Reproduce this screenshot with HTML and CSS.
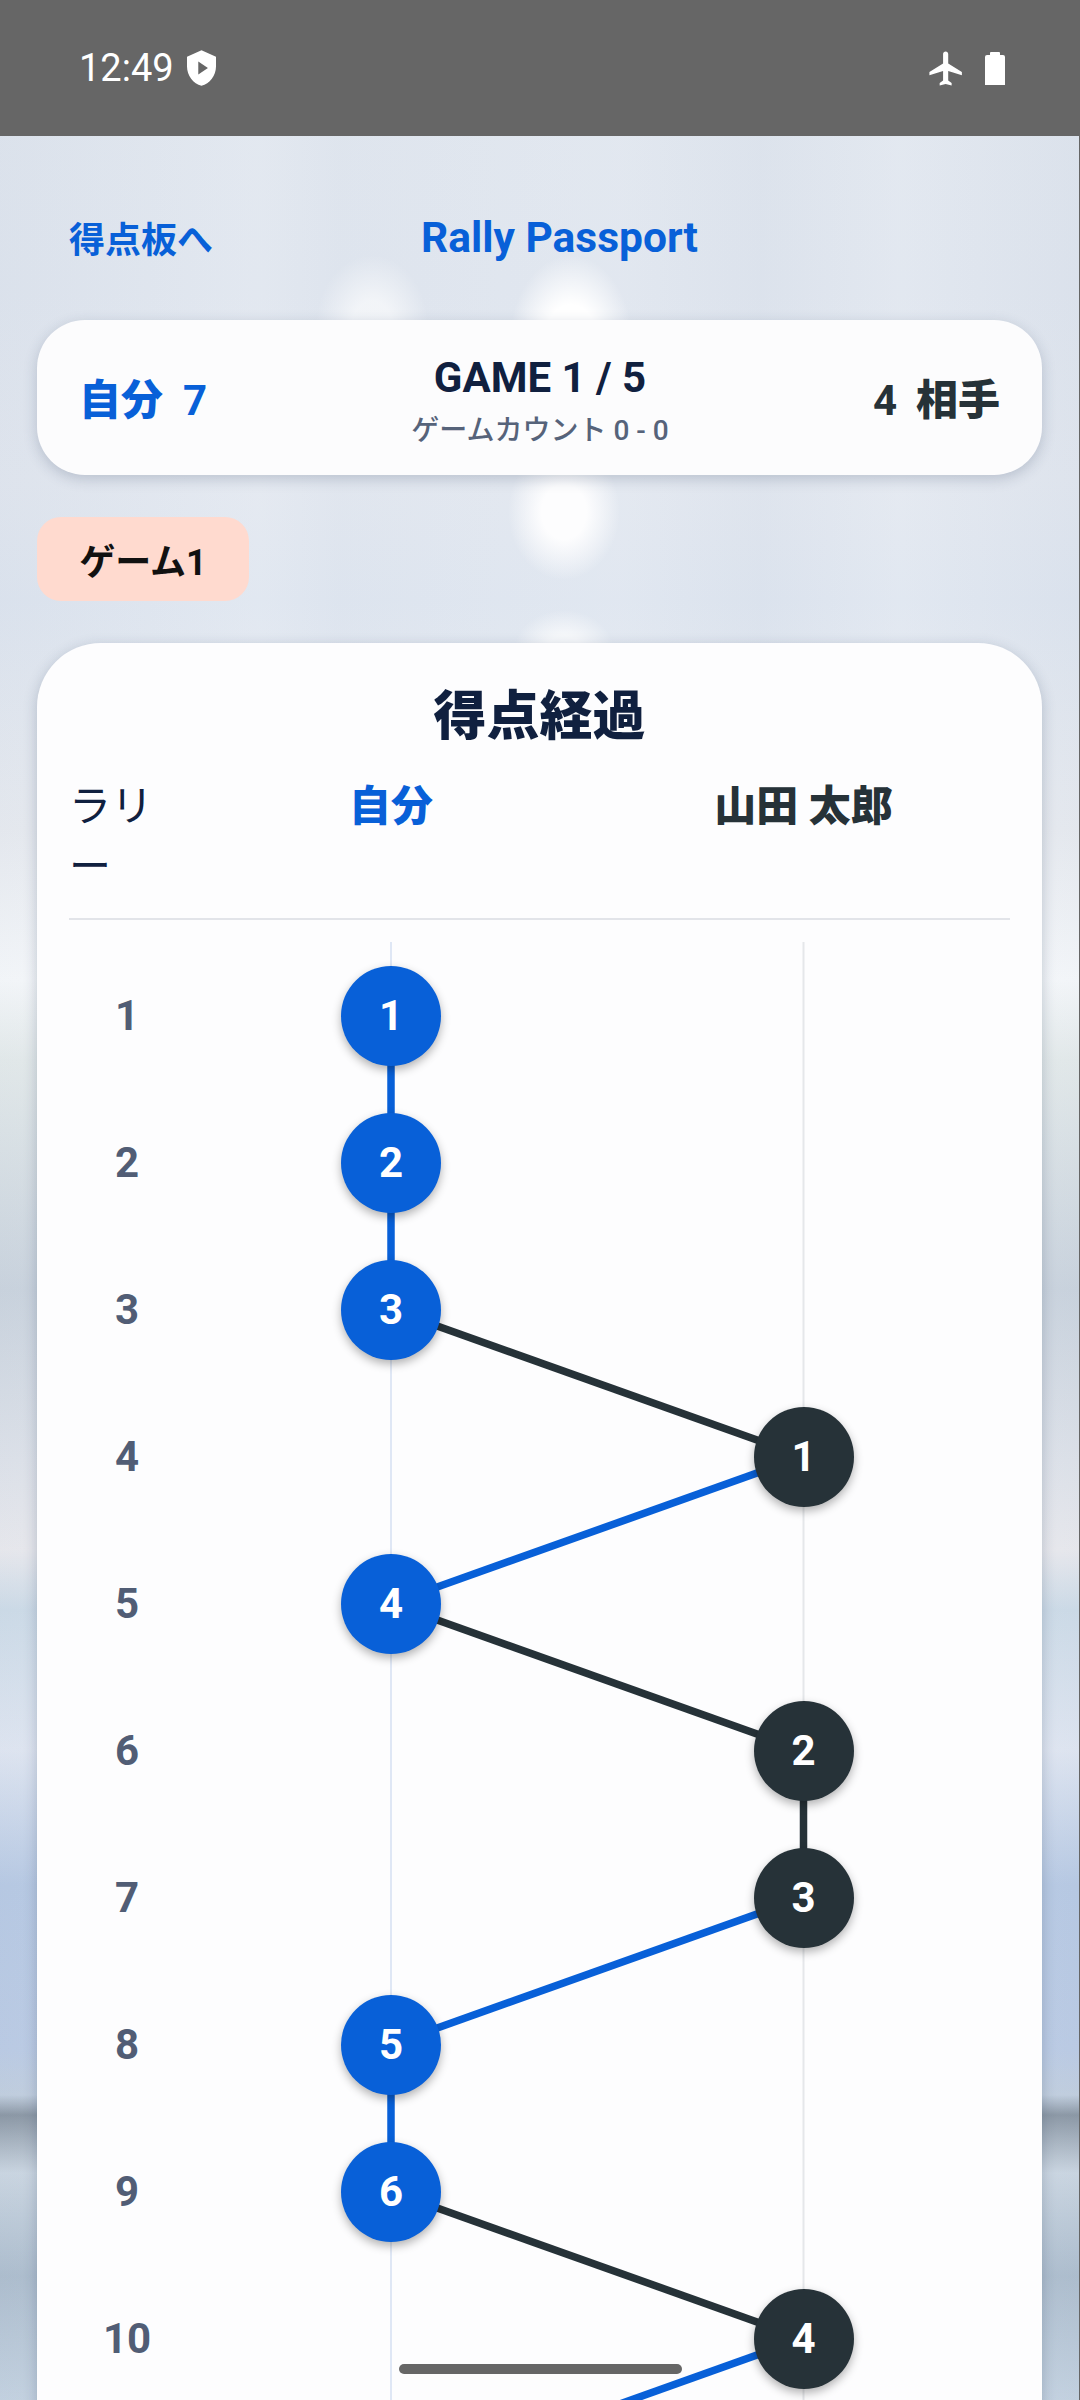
FILE: index.html
```html
<!DOCTYPE html>
<html lang="ja">
<head>
  <meta charset="UTF-8">
  <meta name="viewport" content="width=device-width, initial-scale=1.0">
  <title>Rally Passport</title>
  <link rel="stylesheet" href="styles.css">
</head>
<body>
  <div class="statusbar">
    <div class="status-left">
      <span class="clock">12:49</span>
      <svg class="icon-shield" viewBox="3 1 18 22" role="img" aria-label="VPN">
        <path fill="#fff" fill-rule="evenodd" d="M12 1 3 5v6c0 5.55 3.84 10.74 9 12 5.16-1.26 9-6.45 9-12V5l-9-4zM10 8v8l6-4z"/>
      </svg>
    </div>
    <div class="status-right">
      <svg class="icon-plane" viewBox="0 0 24 24" role="img" aria-label="Airplane mode">
        <path fill="#fff" d="M21 16v-2l-8-5V3.5c0-.83-.67-1.5-1.5-1.5S10 2.67 10 3.5V9l-8 5v2l8-2.5V19l-2 1.5V22l3.5-1 3.5 1v-1.5L13 19v-5.5l8 2.5z"/>
      </svg>
      <svg class="icon-battery" viewBox="0 0 20 33" role="img" aria-label="Battery">
        <path fill="#fff" d="M6 0h8a1 1 0 0 1 1 1v2h3a2 2 0 0 1 2 2v28H0V5a2 2 0 0 1 2-2h3V1a1 1 0 0 1 1-1z"/>
      </svg>
    </div>
  </div>

  <main class="screen">
    <header class="topbar">
      <a class="back-link" href="#">得点板へ</a>
      <h1 class="app-title">Rally Passport</h1>
    </header>

    <section class="scoreboard">
      <div class="side side-me"><span class="heavy">自分</span><span>7</span></div>
      <div class="game-info">
        <div class="game-no">GAME 1 / 5</div>
        <div class="game-count">ゲームカウント 0 - 0</div>
      </div>
      <div class="side side-opp"><span>4</span><span class="heavy">相手</span></div>
    </section>

    <div class="chip">ゲーム1</div>

    <section class="card">
      <h2 class="card-title">得点経過</h2>
      <div class="grid-row head-row">
        <div class="head-rally">ラリー</div>
        <div class="head-me heavy">自分</div>
        <div class="head-opp heavy">山田 太郎</div>
      </div>

      <div class="chart">
        <svg class="chart-lines" viewBox="0 0 941 1617" width="941" height="1617">
          <line class="guide guide-me" x1="322" y1="0" x2="322" y2="1617"/>
          <line class="guide guide-opp" x1="734.5" y1="0" x2="734.5" y2="1617"/>
          <line class="link me" x1="322" y1="73.5" x2="322" y2="220.5"/>
          <line class="link me" x1="322" y1="220.5" x2="322" y2="367.5"/>
          <line class="link opp" x1="322" y1="367.5" x2="734.5" y2="514.5"/>
          <line class="link me" x1="734.5" y1="514.5" x2="322" y2="661.5"/>
          <line class="link opp" x1="322" y1="661.5" x2="734.5" y2="808.5"/>
          <line class="link opp" x1="734.5" y1="808.5" x2="734.5" y2="955.5"/>
          <line class="link me" x1="734.5" y1="955.5" x2="322" y2="1102.5"/>
          <line class="link me" x1="322" y1="1102.5" x2="322" y2="1249.5"/>
          <line class="link opp" x1="322" y1="1249.5" x2="734.5" y2="1396.5"/>
          <line class="link me" x1="734.5" y1="1396.5" x2="322" y2="1543.5"/>
        </svg>

        <div class="grid-row rally"><div class="rally-no">1</div><div class="cell"><span class="node me">1</span></div><div class="cell"></div></div>
        <div class="grid-row rally"><div class="rally-no">2</div><div class="cell"><span class="node me">2</span></div><div class="cell"></div></div>
        <div class="grid-row rally"><div class="rally-no">3</div><div class="cell"><span class="node me">3</span></div><div class="cell"></div></div>
        <div class="grid-row rally"><div class="rally-no">4</div><div class="cell"></div><div class="cell"><span class="node opp">1</span></div></div>
        <div class="grid-row rally"><div class="rally-no">5</div><div class="cell"><span class="node me">4</span></div><div class="cell"></div></div>
        <div class="grid-row rally"><div class="rally-no">6</div><div class="cell"></div><div class="cell"><span class="node opp">2</span></div></div>
        <div class="grid-row rally"><div class="rally-no">7</div><div class="cell"></div><div class="cell"><span class="node opp">3</span></div></div>
        <div class="grid-row rally"><div class="rally-no">8</div><div class="cell"><span class="node me">5</span></div><div class="cell"></div></div>
        <div class="grid-row rally"><div class="rally-no">9</div><div class="cell"><span class="node me">6</span></div><div class="cell"></div></div>
        <div class="grid-row rally"><div class="rally-no">10</div><div class="cell"></div><div class="cell"><span class="node opp">4</span></div></div>
      </div>
    </section>
  </main>

  <div class="gesture-bar"></div>
</body>
</html>
```

FILE: styles.css
```css
* {
  box-sizing: border-box;
}

html,
body {
  margin: 0;
  padding: 0;
  width: 1080px;
  height: 2400px;
  overflow: hidden;
}

body {
  position: relative;
  display: flex;
  flex-direction: column;
  font-family: Roboto, "Noto Sans CJK JP", sans-serif;
  color: #263238;
}

h1,
h2 {
  margin: 0;
}

.heavy {
  font-weight: 900;
}

/* status bar */
.statusbar {
  flex: none;
  height: 136px;
  padding: 0 75px 0 79px;
  display: flex;
  align-items: center;
  justify-content: space-between;
  background-color: #666666;
  color: #ffffff;
}

.status-left,
.status-right {
  display: flex;
  align-items: center;
}

.clock {
  font-size: 38px;
  line-height: 40px;
}

.icon-shield {
  width: 29px;
  height: 36px;
  margin-left: 13px;
}

.icon-plane {
  width: 41px;
  height: 41px;
}

.icon-battery {
  width: 20px;
  height: 33px;
  margin-left: 18px;
}

/* blurred stadium photo, approximated with gradients */
.screen {
  flex: 1;
  min-height: 0;
  overflow: hidden;
  padding: 0 37px;
  border-right: 1px solid #666666;
  background:
    radial-gradient(ellipse 62px 90px at 571px 345px, #ffffff 45%, rgba(255, 255, 255, 0) 100%),
    radial-gradient(ellipse 56px 68px at 564px 512px, #fdfdfe 40%, rgba(255, 255, 255, 0) 100%),
    radial-gradient(ellipse 56px 70px at 372px 325px, rgba(255, 255, 255, 0.6) 35%, rgba(255, 255, 255, 0) 100%),
    radial-gradient(ellipse 50px 40px at 564px 650px, rgba(255, 255, 255, 0.7) 35%, rgba(255, 255, 255, 0) 100%),
    linear-gradient(to right,
      rgba(120, 140, 170, 0.05) 0,
      rgba(255, 255, 255, 0.07) 260px,
      rgba(120, 140, 170, 0.02) 340px,
      rgba(255, 255, 255, 0.05) 620px,
      rgba(120, 140, 170, 0.04) 760px,
      rgba(255, 255, 255, 0.07) 900px,
      rgba(120, 140, 170, 0.05) 1080px),
    linear-gradient(to bottom,
      #e1e7ef 0,
      #e0e6ef 290px,
      #e3e8f0 480px,
      #dfe6f0 600px,
      #e9ecf1 830px,
      #f8fafc 980px,
      #e6ecec 1060px,
      #ccd5df 1290px,
      #e0e4eb 1460px,
      #ebebef 1550px,
      #cfdde9 1610px,
      #e2e8f3 1750px,
      #b9cbe5 1885px,
      #bdcde6 2050px,
      #c3d0e0 2095px,
      #8c98a5 2115px,
      #cdd8e3 2173px,
      #afbfcf 2276px,
      #c6d4e2 2400px);
  background-attachment: fixed;
}

.topbar {
  height: 74px;
  margin-top: 64px;
  padding-left: 32px;
  display: flex;
  align-items: center;
  gap: 208px;
}

.back-link {
  font-size: 36px;
  font-weight: 700;
  color: #0860d8;
  text-decoration: none;
}

.app-title {
  font-size: 42.5px;
  font-weight: 700;
  color: #0860d8;
}

/* score summary */
.scoreboard {
  height: 155px;
  margin-top: 46px;
  padding: 6px 42px 0;
  display: flex;
  align-items: center;
  justify-content: space-between;
  background-color: #fcfcfd;
  border-radius: 48px;
  box-shadow: 0 4px 14px rgba(40, 60, 90, 0.22);
}

.side {
  width: 127px;
  display: flex;
  align-items: center;
  justify-content: space-between;
  font-size: 42px;
  font-weight: 700;
  line-height: 60px;
}

.side-me {
  width: 128px;
  color: #0860d8;
}

.game-info {
  margin-top: 6px;
  text-align: center;
}

.game-no {
  font-size: 42px;
  font-weight: 700;
  line-height: 54px;
  color: #10203f;
}

.game-count {
  font-size: 28px;
  font-weight: 500;
  line-height: 52px;
  color: #56637a;
}

.chip {
  width: 212px;
  height: 84px;
  margin-top: 42px;
  display: flex;
  align-items: center;
  justify-content: center;
  font-size: 36px;
  font-weight: 700;
  color: #111111;
  background-color: #ffdacf;
  border-radius: 24px;
}

/* rally chart */
.card {
  margin-top: 42px;
  padding: 32px 32px 0;
  background-color: #fdfdfe;
  border-radius: 64px 64px 0 0;
  box-shadow: 0 4px 14px rgba(40, 60, 90, 0.25);
}

.card-title {
  font-size: 53px;
  font-weight: 900;
  line-height: 78px;
  padding-top: 3px;
  margin-bottom: -3px;
  text-align: center;
  color: #10203f;
}

.grid-row {
  display: grid;
  grid-template-columns: 116px 412px 413px;
}

.head-row {
  margin-top: 24px;
  padding-bottom: 21px;
  border-bottom: 2px solid #e2e4e9;
  font-size: 42px;
  line-height: 60px;
}

.head-rally {
  color: #10203f;
  width: 84px;
}

.head-me,
.head-opp {
  text-align: center;
}

.head-me {
  color: #0860d8;
}

.chart {
  position: relative;
  margin-top: 22px;
}

.chart-lines {
  position: absolute;
  top: 0;
  left: 0;
}

.guide {
  stroke-width: 2;
}

.guide-me {
  stroke: #dfe7f5;
}

.guide-opp {
  stroke: #e5e7ea;
}

.link {
  stroke-width: 7.5;
}

.link.me {
  stroke: #0860d8;
}

.link.opp {
  stroke: #263238;
}

.rally {
  position: relative;
  height: 147px;
  align-items: center;
}

.rally-no {
  font-size: 42px;
  font-weight: 700;
  text-align: center;
  color: #515d75;
}

.cell {
  display: flex;
  justify-content: center;
}

.node {
  width: 100px;
  height: 100px;
  display: flex;
  align-items: center;
  justify-content: center;
  border-radius: 50%;
  font-size: 42px;
  font-weight: 700;
  color: #ffffff;
  box-shadow: 0 4px 10px rgba(0, 0, 0, 0.3);
}

.node.me {
  background-color: #0860d8;
}

.node.opp {
  background-color: #263238;
}

.gesture-bar {
  position: absolute;
  left: 399px;
  top: 2364px;
  width: 283px;
  height: 10px;
  border-radius: 5px;
  background-color: #666666;
}
```
